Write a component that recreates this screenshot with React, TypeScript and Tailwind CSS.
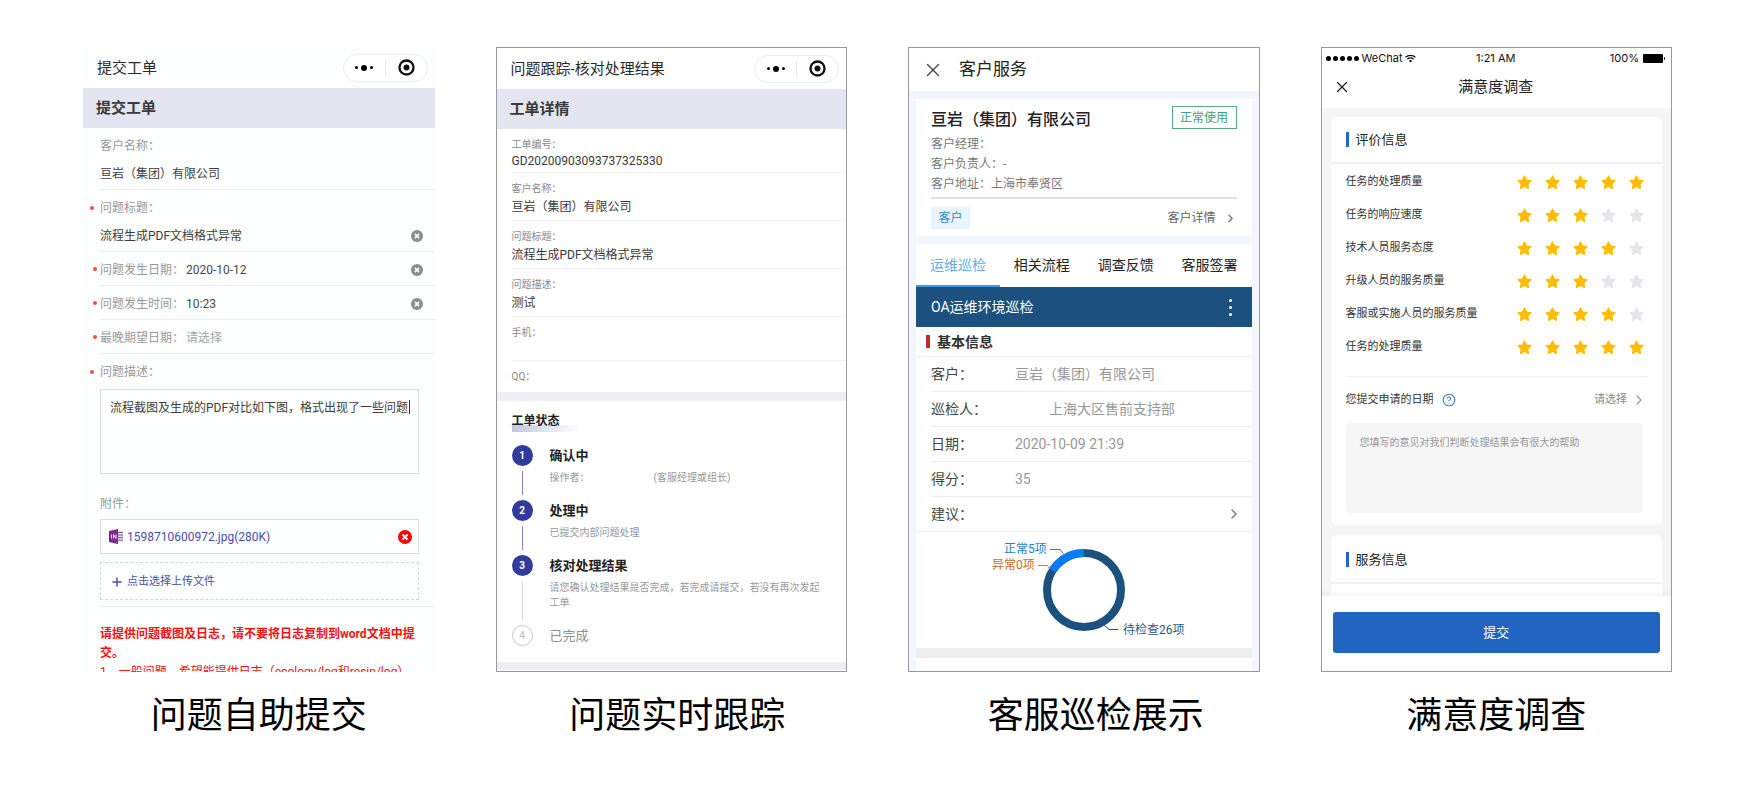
import React from 'react';
import { X, ChevronRight, Plus, CircleHelp } from 'lucide-react';

const FONT = "font-['Roboto','Noto_Sans_CJK_SC',sans-serif]";

const RATINGS = [
  { label: '任务的处理质量', score: 5 },
  { label: '任务的响应速度', score: 3 },
  { label: '技术人员服务态度', score: 4 },
  { label: '升级人员的服务质量', score: 3 },
  { label: '客服或实施人员的服务质量', score: 4 },
  { label: '任务的处理质量', score: 5 },
];

const STEPS = [
  { title: '确认中', done: true, linked: true },
  { title: '处理中', desc: '已提交内部问题处理', done: true, linked: true },
  { title: '核对处理结果', desc: '请您确认处理结果是否完成，若完成请提交，若没有再次发起工单', done: true, linked: false },
  { title: '已完成', done: false, linked: false },
];

const INSPECTION = [
  { label: '客户：', value: '亘岩（集团）有限公司' },
  { label: '巡检人：', value: '上海大区售前支持部', indent: true },
  { label: '日期：', value: '2020-10-09 21:39' },
  { label: '得分：', value: '35' },
];

const TABS = ['运维巡检', '相关流程', '调查反馈', '客服签署'];

/* ---------- shared ---------- */

interface FigureProps {
  caption: string;
  framed?: boolean;
  captionClass?: string;
  children: React.ReactNode;
}

const Figure: React.FC<FigureProps> = ({ caption, framed = true, captionClass = '', children }) => (
  <figure className="flex flex-col min-w-0">
    <div className={`flex-1 flex flex-col overflow-hidden ${framed ? 'border border-[#97999c] bg-white' : 'bg-[#fdfefe]'}`}>
      {children}
    </div>
    <figcaption className={`mt-5 text-center text-[36px] leading-12 text-black whitespace-nowrap ${captionClass}`}>
      {caption}
    </figcaption>
  </figure>
);

const MiniProgramHeader: React.FC<{ title: string }> = ({ title }) => (
  <header className="flex items-center justify-between h-[41px] pl-3.5 pr-[7px]">
    <h2 className="pt-px text-[15px] text-[#2b2b2b]">{title}</h2>
    <div className="flex items-center w-[85px] h-7 rounded-full border border-[#ececec] bg-white">
      <button type="button" aria-label="更多" className="flex-1 flex items-center justify-center gap-[3px]">
        <span className="size-[3px] rounded-full bg-black" />
        <span className="size-[6px] rounded-full bg-black" />
        <span className="size-[3px] rounded-full bg-black" />
      </button>
      <span className="w-px h-4 bg-[#e8e8e8]" />
      <button type="button" aria-label="关闭" className="flex-1 flex items-center justify-center">
        <svg viewBox="0 0 16 16" className="size-[17px]" fill="none">
          <circle cx="8" cy="8" r="6.6" stroke="#111" strokeWidth="2.2" />
          <circle cx="8" cy="8" r="2.8" fill="#111" />
        </svg>
      </button>
    </div>
  </header>
);

const SectionBand: React.FC<{ children: React.ReactNode }> = ({ children }) => (
  <h3 className="flex items-center h-10 pl-[13px] bg-[#e3e6f0] text-[15px] font-bold text-[#3a3a3a]">{children}</h3>
);

const ClearButton: React.FC<{ color?: string; label: string; size?: string }> = ({ color = '#8b8d94', label, size = 'size-3' }) => (
  <button type="button" aria-label={label} className="shrink-0">
    <svg viewBox="0 0 14 14" className={`block ${size}`} fill="none">
      <circle cx="7" cy="7" r="7" fill={color} />
      <path d="M4.5 4.5l5 5M9.5 4.5l-5 5" stroke="#fff" strokeWidth="1.8" />
    </svg>
  </button>
);

/* ---------- 问题自助提交 ---------- */

const Gutter: React.FC<{ required?: boolean; inline?: boolean }> = ({ required, inline }) => (
  <span className={`flex items-center shrink-0 w-[17px] h-4 ${inline ? 'justify-end pr-[3px]' : 'justify-center'}`}>
    {required && <span className="size-1 rounded-full bg-[#f94b4b]" />}
  </span>
);

interface StackedFieldProps {
  id: string;
  label: string;
  value: string;
  required?: boolean;
}

const StackedField: React.FC<StackedFieldProps> = ({ id, label, value, required }) => (
  <div className="flex">
    <div className="pt-2.5"><Gutter required={required} /></div>
    <div className="flex-1 min-w-0 pt-2.5 pb-[7px] pr-3 border-b border-[#ececec]">
      <label htmlFor={id} className="block text-xs leading-4 text-[#999]">{label}</label>
      <div className="flex items-center mt-3">
        <input id={id} defaultValue={value} className="flex-1 min-w-0 h-4 text-xs text-[#3d3d3d] bg-transparent outline-none" />
        {required && <ClearButton label={`清除${label}`} />}
      </div>
    </div>
  </div>
);

interface InlineFieldProps {
  id: string;
  label: string;
  value?: string;
}

const InlineField: React.FC<InlineFieldProps> = ({ id, label, value }) => (
  <div className="flex items-center h-[34px]">
    <Gutter required inline />
    <div className="flex-1 min-w-0 self-stretch flex items-center pt-0.5 pr-3 border-b border-[#ececec]">
      <label htmlFor={id} className="text-xs text-[#999]">{label}</label>
      <input
        id={id}
        defaultValue={value}
        placeholder="请选择"
        className="flex-1 min-w-0 ml-0.5 h-4 text-xs text-[#4a4a4a] placeholder:text-[#a5a5a5] bg-transparent outline-none"
      />
      {value && <ClearButton label={`清除${label}`} />}
    </div>
  </div>
);

const SubmitTicket: React.FC = () => (
  <>
    <MiniProgramHeader title="提交工单" />
    <SectionBand>提交工单</SectionBand>
    <StackedField id="customer" label="客户名称：" value="亘岩（集团）有限公司" />
    <StackedField id="title" label="问题标题：" value="流程生成PDF文档格式异常" required />
    <InlineField id="date" label="问题发生日期：" value="2020-10-12" />
    <InlineField id="time" label="问题发生时间：" value="10:23" />
    <InlineField id="deadline" label="最晚期望日期：" />

    <div className="flex pt-2.5">
      <Gutter required />
      <label htmlFor="description" className="text-xs leading-4 text-[#999]">问题描述：</label>
    </div>
    <div className="relative mt-[9px] ml-[17px] mr-4">
      <textarea
        id="description"
        defaultValue="流程截图及生成的PDF对比如下图，格式出现了一些问题"
        className="block w-full h-[85px] pl-[9px] pt-[9px] border border-[#dcdedf] text-xs leading-[18px] text-[#3d3d3d] bg-transparent resize-none outline-none overflow-hidden"
      />
      <span className="absolute right-[9px] top-[11px] w-px h-3.5 bg-[#333]" />
    </div>

    <div className="ml-[17px] pt-[22px] pb-[6px] border-b border-[#ececec]">
      <div className="mr-4">
        <p className="text-xs leading-4 text-[#999]">附件：</p>
        <div className="flex items-center mt-[7px] h-[35px] pl-2 pr-[6px] border border-[#dcdedf]">
          <svg viewBox="0 0 15 15" className="size-[15px] shrink-0">
            <path d="M8 2h6v11H8z" fill="#e8dcee" />
            <path d="M9 3.5h5M9 6h5M9 8.5h5M9 11h5" stroke="#8a55a3" strokeWidth="1" />
            <path d="M0 2l9-2v15l-9-2z" fill="#7a2a8c" />
            <path d="M2.5 5.5v4M4.5 9.5v-4l2.5 4v-4" stroke="#fff" strokeWidth="0.9" fill="none" />
          </svg>
          <a href="#file" className="flex-1 ml-[3px] text-xs text-[#4a4fae]">1598710600972.jpg(280K)</a>
          <ClearButton label="删除附件" color="#fb0508" size="size-3.5" />
        </div>
        <button type="button" className="flex items-center w-full mt-2 h-[38px] pt-0.5 pl-[9px] border border-dashed border-[#d5d7da] text-[11px] text-[#4a4fae]">
          <Plus size={14} strokeWidth={2.5} />
          <span className="ml-[3px]">点击选择上传文件</span>
        </button>
      </div>
    </div>

    <div className="mt-[18px] ml-[17px] mr-4 text-xs leading-[19px] text-[#fd1010]">
      <p className="font-bold">请提供问题截图及日志，请不要将日志复制到word文档中提交。</p>
      <p className="h-[9px] overflow-hidden whitespace-nowrap">1、一般问题，希望能提供日志（ecology/log和resin/log）</p>
    </div>
  </>
);

/* ---------- 问题实时跟踪 ---------- */

const Detail: React.FC<{ label: string; value: string; tight?: boolean }> = ({ label, value, tight }) => (
  <div className="ml-[15px] pt-2 pb-[3px] border-b border-[#f0f1f3]">
    <dt className="text-[10px] leading-4 text-[#8a8a8a]">{label}</dt>
    <dd className={`text-xs text-[#3a3a3a] ${tight ? 'leading-4' : 'leading-5'}`}>{value}</dd>
  </div>
);

const TrackTicket: React.FC = () => (
  <>
    <MiniProgramHeader title="问题跟踪-核对处理结果" />
    <SectionBand>工单详情</SectionBand>
    <dl>
      <Detail label="工单编号：" value="GD20200903093737325330" tight />
      <Detail label="客户名称：" value="亘岩（集团）有限公司" />
      <Detail label="问题标题：" value="流程生成PDF文档格式异常" />
      <Detail label="问题描述：" value="测试" />
      <div className="ml-[15px] h-11 pt-2 border-b border-[#f0f1f3]">
        <dt className="text-[10px] leading-4 text-[#8a8a8a]">手机：</dt>
      </div>
      <div className="ml-[15px] h-[31px] pt-2">
        <dt className="text-[10px] leading-4 text-[#8a8a8a]">QQ：</dt>
      </div>
    </dl>
    <div className="h-[9px] bg-[#edeff4]" />

    <section className="pl-[15px] pr-4 pt-3 pb-4">
      <div className="relative h-[19px]">
        <span className="absolute left-0 bottom-0 w-[68px] h-[7px] bg-linear-to-r from-[#c3c7df] to-white" />
        <h3 className="relative text-xs leading-4 font-bold text-[#222]">工单状态</h3>
      </div>
      <ol className="mt-[13px]">
        {STEPS.map((step, i) => {
          const last = i === STEPS.length - 1;
          return (
            <li key={step.title} className="flex">
              <div className="flex flex-col items-center w-[21px] mr-[17px]">
                <span
                  className={`flex items-center justify-center size-[21px] rounded-full text-[10px] ${
                    step.done ? 'bg-[#313b9c] text-white font-bold' : 'border border-[#c8c8c8] text-[#bbb]'
                  }`}
                >
                  {i + 1}
                </span>
                {!last && <span className={`flex-1 w-px my-[5px] ${step.linked ? 'bg-[#7f84c2]' : 'bg-[#d8d8d8]'}`} />}
              </div>
              <div className={`flex-1 min-w-0 pr-1 ${last ? '' : 'pb-[15px]'}`}>
                <h4 className={`text-[13px] leading-[21px] ${step.done ? 'font-bold text-[#222]' : 'text-[#8f8f8f]'}`}>{step.title}</h4>
                {i === 0 && (
                  <p className="flex mt-1 text-[10px] leading-[15px] text-[#999]">
                    <span className="w-[104px]">操作者：</span>
                    <span>(客服经理或组长)</span>
                  </p>
                )}
                {step.desc && <p className="mt-1 text-[10px] leading-[15px] text-[#999]">{step.desc}</p>}
              </div>
            </li>
          );
        })}
      </ol>
    </section>
    <div className="h-2 bg-[#edeff4]" />
  </>
);

/* ---------- 客服巡检展示 ---------- */

const InspectionChart: React.FC = () => (
  <svg viewBox="0 0 336 116" className="block mx-auto w-[336px] h-[116px]" fill="none" fontSize="12">
    <circle cx="168" cy="58" r="37" stroke="#1c507f" strokeWidth="8" />
    {/* 5 of 31 checks */}
    <path d="M136.6 38.4A37 37 0 0 1 168 21" stroke="#0a7bf7" strokeWidth="8" />
    <path d="M134 17.5h10l4 5" stroke="#2a84dc" />
    <path d="M122 33.5h9.5l2.500 4" stroke="#d2762d" />
    <path d="M187 92l6 5.5h9" stroke="#1c507f" />
    <text x="88" y="21" fill="#1f7fd8">正常5项</text>
    <text x="76" y="37" fill="#cf6a1c">异常0项</text>
    <text x="207" y="102" fill="#2a5a86">待检查26项</text>
  </svg>
);

const Inspection: React.FC = () => (
  <>
    <header className="flex items-center h-[43px] pl-[13px]">
      <button type="button" aria-label="关闭"><X size={22} strokeWidth={1.5} color="#44464f" /></button>
      <h2 className="ml-[15px] text-[17px] text-[#222]">客户服务</h2>
    </header>
    <div className="flex-1 flex flex-col px-[7px] pt-2 bg-[#f2f6fd]">
      <section className="px-[15px] pt-[7px] pb-[7px] bg-white">
        <div className="flex items-start justify-between">
          <h3 className="text-base font-medium leading-[27px] text-[#222] whitespace-nowrap">亘岩（集团）有限公司</h3>
          <span className="flex items-center justify-center w-[65px] h-[23px] border border-[#56ab85] text-xs text-[#46a078]">正常使用</span>
        </div>
        <div className="mt-px pb-[3px] text-xs leading-[20px] text-[#777]">
          <p>客户经理：</p>
          <p>客户负责人：-</p>
          <p>客户地址：上海市奉贤区</p>
        </div>
        <div className="flex items-center justify-between pt-2 border-t-2 border-[#dfdfdf]">
          <span className="flex items-center justify-center w-[39px] h-[22px] bg-[#e8f5fe] text-xs text-[#2c8cc6]">客户</span>
          <a href="#customer-detail" className="flex items-center text-xs text-[#666]">
            客户详情
            <ChevronRight size={13} className="ml-2" />
          </a>
        </div>
      </section>

      <section className="flex-1 mt-2 bg-white">
        <nav className="grid grid-cols-4 h-[43px]">
          {TABS.map((tab, i) => (
            <button
              key={tab}
              type="button"
              className={`border-b-2 text-sm whitespace-nowrap ${i === 0 ? 'border-[#3f9ae6] text-[#5fb0e6]' : 'border-transparent text-[#222]'}`}
            >
              {tab}
            </button>
          ))}
        </nav>
        <div className="flex items-center justify-between h-10 pl-[15px] pr-5 bg-[#1c507f] text-sm text-white">
          <h3>OA运维环境巡检</h3>
          <button type="button" aria-label="菜单" className="flex flex-col gap-1">
            <span className="size-[3px] rounded-full bg-white" />
            <span className="size-[3px] rounded-full bg-white" />
            <span className="size-[3px] rounded-full bg-white" />
          </button>
        </div>
        <h4 className="flex items-center h-[30px] pl-2.5 border-b border-[#ededed] text-sm font-bold text-[#333]">
          <span className="w-1 h-[13px] mr-[7px] bg-[#c22a2a]" />
          基本信息
        </h4>
        <dl className="pl-[15px] text-sm">
          {INSPECTION.map((row) => (
            <div key={row.label} className="flex items-center h-[35px] border-b border-[#ededed]">
              <dt className="w-[84px] text-[#444]">{row.label}</dt>
              <dd className={`text-[#999] ${row.indent ? 'pl-[34px]' : ''}`}>{row.value}</dd>
            </div>
          ))}
        </dl>
        <a href="#advice" className="flex items-center justify-between h-[35px] pl-[15px] pr-2.5 border-b border-[#ededed] text-sm text-[#444]">
          建议：
          <ChevronRight size={16} color="#777" />
        </a>
        <InspectionChart />
        <div className="h-2.5 mb-3 bg-[#eee]" />
      </section>
    </div>
  </>
);

/* ---------- 满意度调查 ---------- */

const Star: React.FC<{ on: boolean; label: string }> = ({ on, label }) => (
  <button type="button" aria-label={label}>
    <svg viewBox="0 0 24 24" className="block size-[15px]">
      <path
        d="M12 2l3.1 6.3 6.900 1-5 4.900 1.200 6.900L12 17.800l-6.200 3.300L7 14.200 2 9.300l6.900-1z"
        fill={on ? '#ffbc05' : '#e3e6ea'}
        stroke={on ? '#ffbc05' : '#e3e6ea'}
        strokeWidth="2.5"
        strokeLinejoin="round"
      />
    </svg>
  </button>
);

const CardTitle: React.FC<{ children: React.ReactNode }> = ({ children }) => (
  <h3 className="flex items-center h-[47px] pl-[15px] border-b-2 border-[#f1f1f1] text-[13px] text-[#222]">
    <span className="w-[3px] h-[15px] mr-[7px] bg-[#1f66c8]" />
    {children}
  </h3>
);

const Survey: React.FC = () => (
  <>
    <div className="grid grid-cols-3 items-center h-5 pl-1 pr-[5px] font-['Inter','Noto_Sans_CJK_SC',sans-serif] text-[11px] text-[#111] whitespace-nowrap">
      <span className="flex items-center">
        <span className="flex gap-[2px] mr-[3px]">
          {[0, 1, 2, 3, 4].map((n) => (
            <span key={n} className="size-[5px] rounded-full bg-black" />
          ))}
        </span>
        WeChat
        <svg viewBox="0 0 12 9" className="ml-0.5 w-[11px] h-[9px]" fill="none" stroke="#111" strokeWidth="1.4">
          <path d="M0.6 3.2a7.8 7.8 0 0 1 10.8 0M2.6 5.3a5 5 0 0 1 6.800 0" />
          <path d="M6 8.8L4.2 7a2.6 2.6 0 0 1 3.600 0z" fill="#111" stroke="none" />
        </svg>
      </span>
      <span className="text-center">1:21 AM</span>
      <span className="flex items-center justify-end">
        100%
        <svg viewBox="0 0 23 9" className="ml-1 w-[23px] h-[9px]">
          <rect x="0" y="0" width="20" height="9" rx="1" fill="#000" />
          <path d="M21 3c1.5 0 1.5 3 0 3z" fill="#000" />
        </svg>
      </span>
    </div>
    <header className="grid grid-cols-[1fr_auto_1fr] items-center h-10 pl-[11px] pr-3 pb-0.5">
      <button type="button" aria-label="关闭" className="justify-self-start"><X size={18} strokeWidth={1.7} color="#222" /></button>
      <h2 className="text-[15px] text-[#222]">满意度调查</h2>
    </header>

    <div className="px-[9px] pt-[9px] bg-[#f5f5f5]">
      <section className="pb-3 rounded-md bg-white">
        <CardTitle>评价信息</CardTitle>
        <div className="mx-[15px] pt-0.5 pb-3 border-b border-[#f0f0f0]">
          {RATINGS.map((item, i) => (
            <div key={i} className="flex items-center justify-between h-[33px] pr-[3px]">
              <span className="text-[11px] text-[#333]">{item.label}</span>
              <div className="flex gap-[13px]">
                {[1, 2, 3, 4, 5].map((n) => (
                  <Star key={n} on={n <= item.score} label={`${item.label} ${n}星`} />
                ))}
              </div>
            </div>
          ))}
        </div>
        <div className="flex items-center h-[46px] pl-[15px] pr-[15px] text-[11px]">
          <label htmlFor="apply-date" className="text-[#333]">您提交申请的日期</label>
          <CircleHelp size={14} strokeWidth={1.8} color="#3a7bd0" className="ml-2" />
          <select id="apply-date" className="ml-auto appearance-none bg-transparent text-[#8a8a8a] outline-none">
            <option>请选择</option>
          </select>
          <ChevronRight size={16} strokeWidth={1.8} color="#999" className="ml-1" />
        </div>
        <div className="pl-[15px] pr-[19px]">
          <textarea
            aria-label="意见"
            placeholder="您填写的意见对我们判断处理结果会有很大的帮助"
            className="block w-full h-[90px] pl-3.5 pt-3 rounded bg-[#f6f6f6] text-[10px] leading-4 placeholder:text-[#999] resize-none outline-none"
          />
        </div>
      </section>
      <section className="mt-2.5 pt-0.5 pb-3 rounded-t-md bg-white">
        <CardTitle>服务信息</CardTitle>
      </section>
    </div>

    <div className="relative flex-1 px-[11px] pt-4 pb-4 bg-white shadow-[0_-2px_6px_rgba(0,0,0,0.05)]">
      <button type="button" className="w-full h-[41px] rounded-[3px] bg-[#2265c1] text-[13px] text-white">提交</button>
    </div>
  </>
);

export default function App() {
  return (
    <main className={`min-h-screen bg-white pt-[47px] pl-[83px] pr-[82px] ${FONT}`}>
      <div className="grid grid-cols-4 gap-[61px]">
        <Figure caption="问题自助提交" framed={false}><SubmitTicket /></Figure>
        <Figure caption="问题实时跟踪" captionClass="pl-3"><TrackTicket /></Figure>
        <Figure caption="客服巡检展示" captionClass="pl-6"><Inspection /></Figure>
        <Figure caption="满意度调查"><Survey /></Figure>
      </div>
    </main>
  );
}
